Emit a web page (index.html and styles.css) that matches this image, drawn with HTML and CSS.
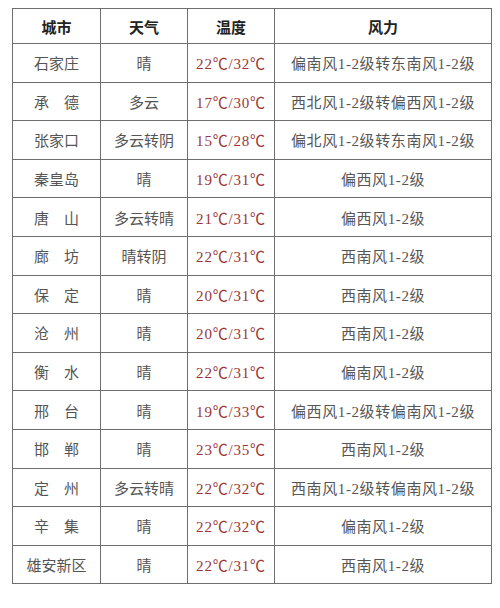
FILE: index.html
```html
<!DOCTYPE html>
<html lang="zh">
<head>
<meta charset="utf-8">
<title>天气</title>
<link rel="stylesheet" href="styles.css">
</head>
<body>
<table class="weather">
<colgroup><col class="c1"><col class="c2"><col class="c3"><col class="c4"></colgroup>
<thead>
<tr><th>城市</th><th>天气</th><th>温度</th><th>风力</th></tr>
</thead>
<tbody>
<tr><td>石家庄</td><td>晴</td><td class="t">22℃/32℃</td><td class="w">偏南风1-2级转东南风1-2级</td></tr>
<tr><td>承　德</td><td>多云</td><td class="t">17℃/30℃</td><td class="w">西北风1-2级转偏西风1-2级</td></tr>
<tr><td>张家口</td><td>多云转阴</td><td class="t">15℃/28℃</td><td class="w">偏北风1-2级转东南风1-2级</td></tr>
<tr><td>秦皇岛</td><td>晴</td><td class="t">19℃/31℃</td><td class="w">偏西风1-2级</td></tr>
<tr><td>唐　山</td><td>多云转晴</td><td class="t">21℃/31℃</td><td class="w">偏西风1-2级</td></tr>
<tr><td>廊　坊</td><td>晴转阴</td><td class="t">22℃/31℃</td><td class="w">西南风1-2级</td></tr>
<tr><td>保　定</td><td>晴</td><td class="t">20℃/31℃</td><td class="w">西南风1-2级</td></tr>
<tr><td>沧　州</td><td>晴</td><td class="t">20℃/31℃</td><td class="w">西南风1-2级</td></tr>
<tr><td>衡　水</td><td>晴</td><td class="t">22℃/31℃</td><td class="w">偏南风1-2级</td></tr>
<tr><td>邢　台</td><td>晴</td><td class="t">19℃/33℃</td><td class="w">偏西风1-2级转偏南风1-2级</td></tr>
<tr><td>邯　郸</td><td>晴</td><td class="t">23℃/35℃</td><td class="w">西南风1-2级</td></tr>
<tr><td>定　州</td><td>多云转晴</td><td class="t">22℃/32℃</td><td class="w">西南风1-2级转偏南风1-2级</td></tr>
<tr><td>辛　集</td><td>晴</td><td class="t">22℃/32℃</td><td class="w">偏南风1-2级</td></tr>
<tr><td>雄安新区</td><td>晴</td><td class="t">22℃/31℃</td><td class="w">西南风1-2级</td></tr>
</tbody>
</table>
</body>
</html>
```
FILE: styles.css
```css
html, body {
  margin: 0;
  padding: 0;
  background: #ffffff;
}
body {
  padding: 8px 0 0 12px;
  font-family: "Liberation Serif", "Noto Sans CJK SC", serif;
  font-size: 15px;
  color: #555555;
}
.weather {
  border-collapse: collapse;
  table-layout: fixed;
  width: 479px;
}
.c1 { width: 88px; }
.c2 { width: 87px; }
.c3 { width: 87px; }
.c4 { width: 217px; }
.weather th,
.weather td {
  border: 1px solid #6e6e6e;
  text-align: center;
  vertical-align: middle;
  padding: 0;
  white-space: nowrap;
}
.weather th {
  height: 34px;
  font-weight: bold;
  color: #222222;
}
.weather td {
  height: 37.6px;
}
.weather td.t {
  color: #9b3434;
  letter-spacing: 0.8px;
}
.weather td.w {
  letter-spacing: 0.6px;
}
```
